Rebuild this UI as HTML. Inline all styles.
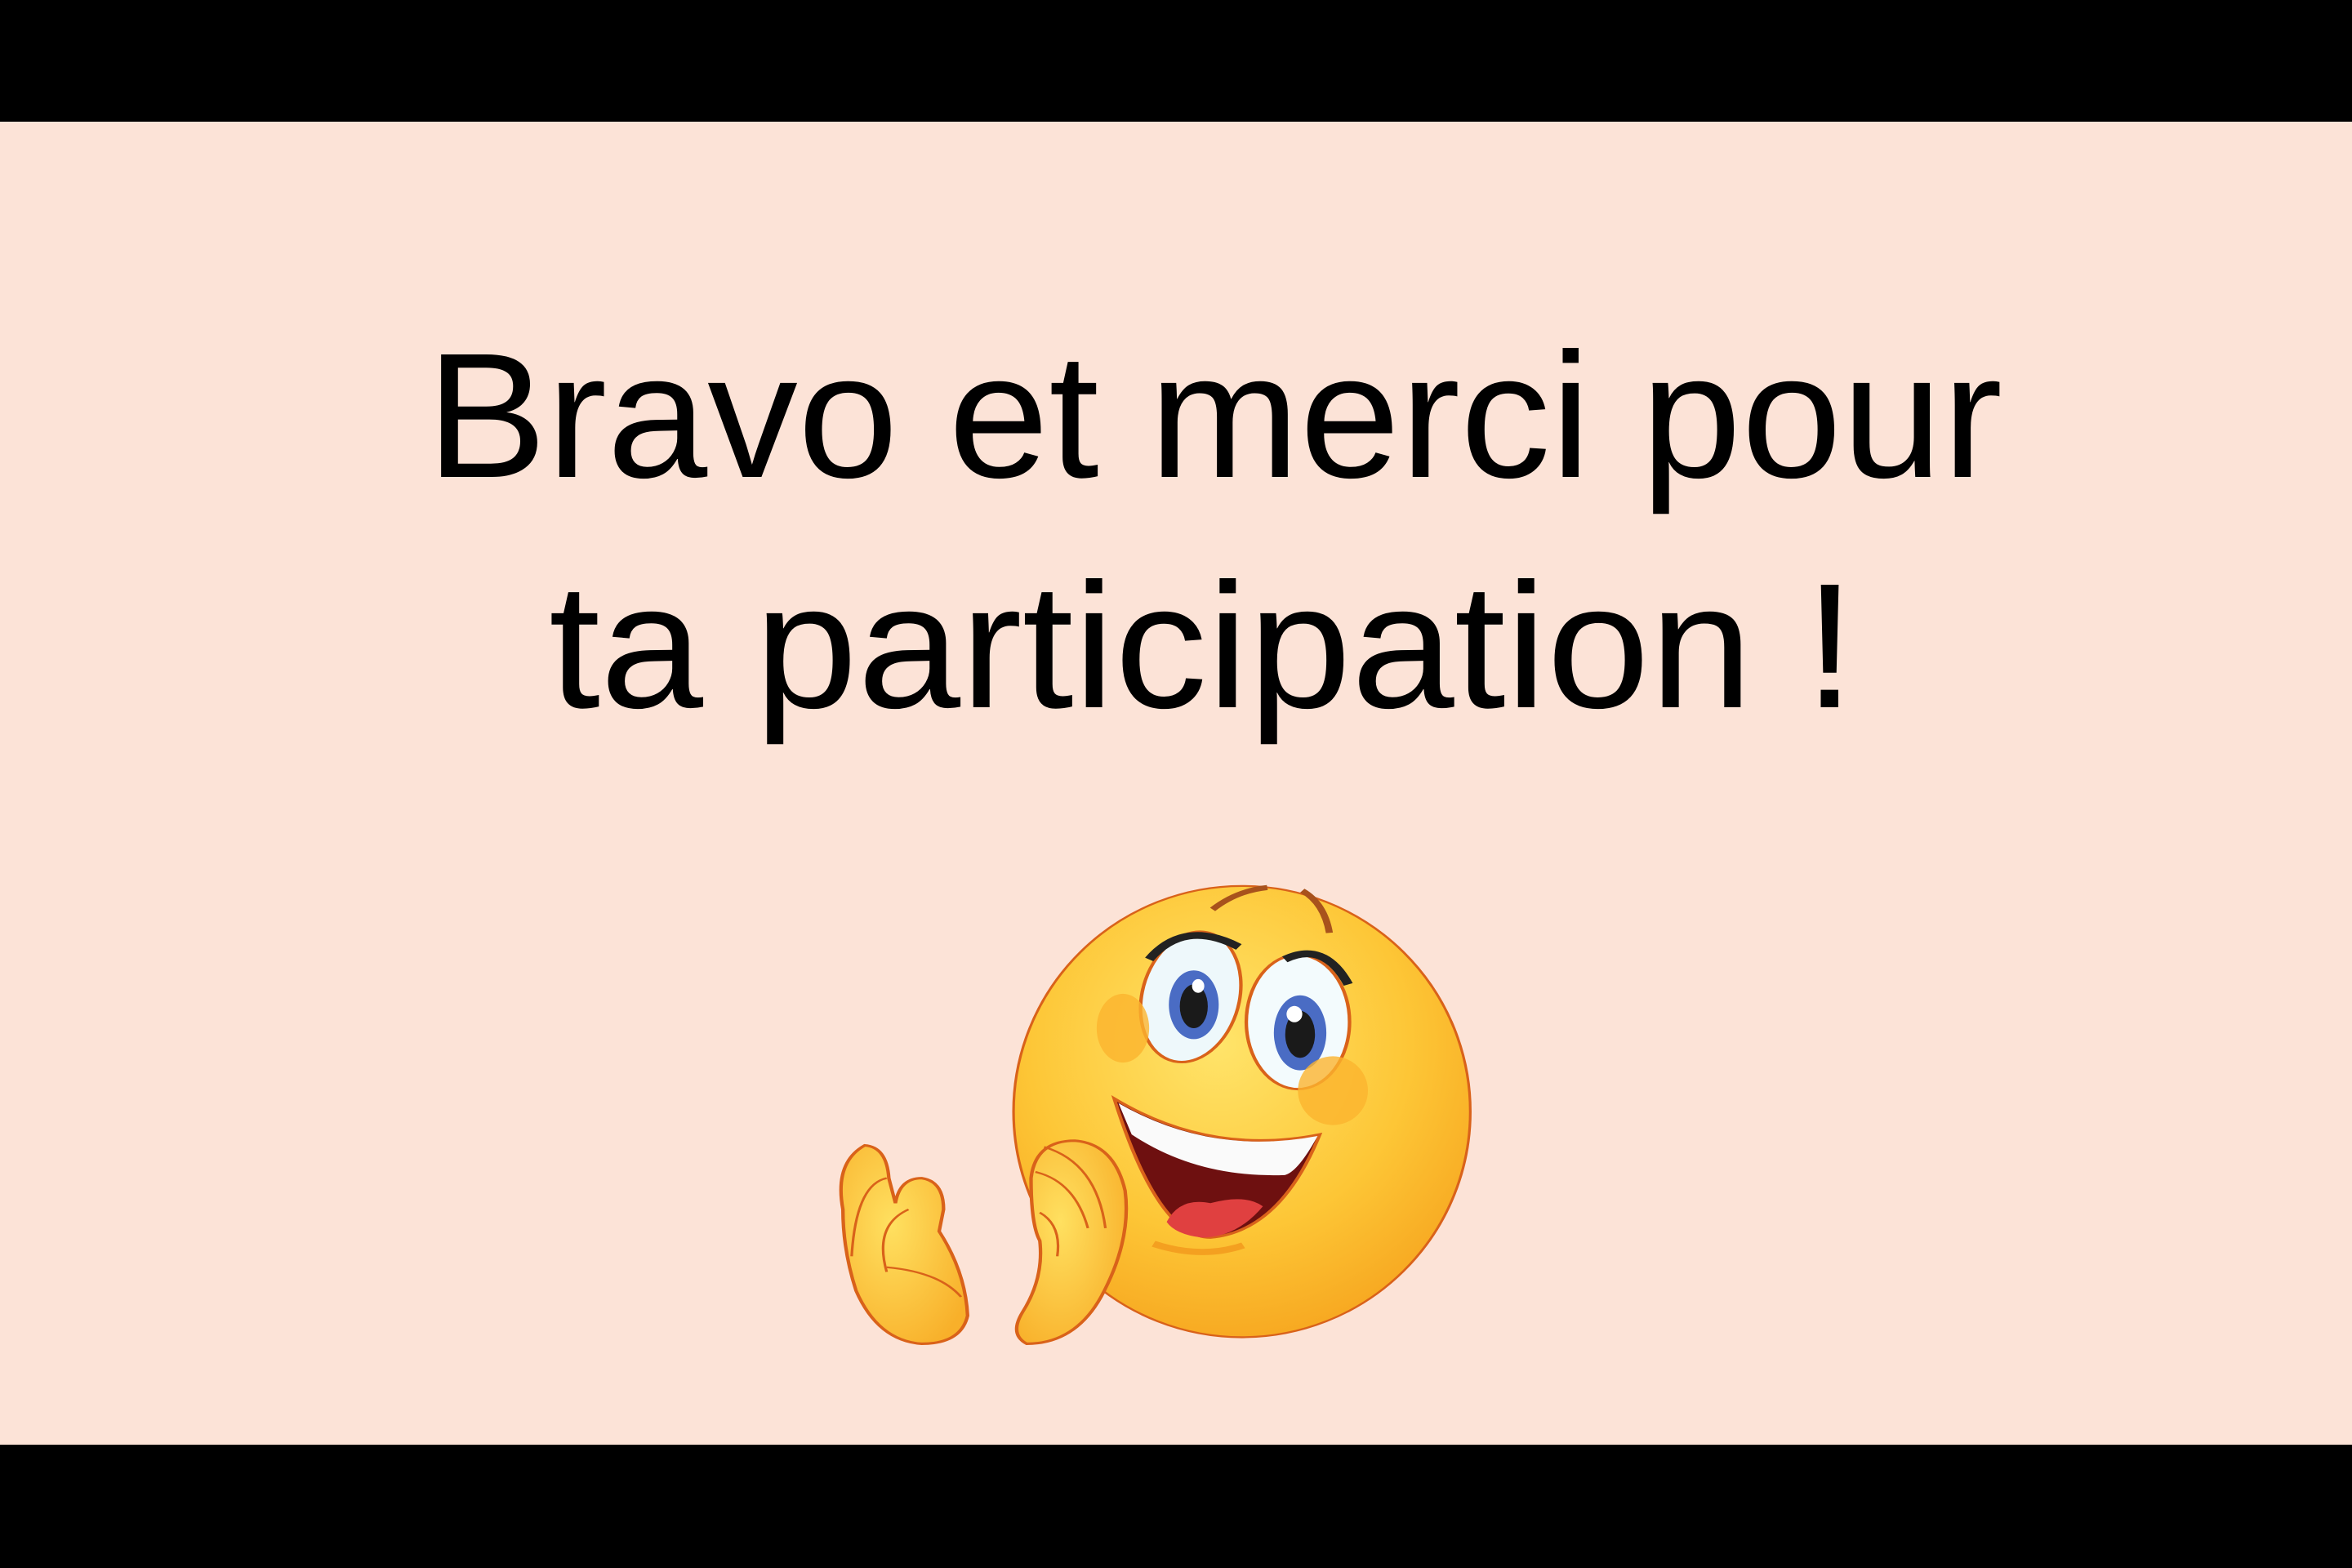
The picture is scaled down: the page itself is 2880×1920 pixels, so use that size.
<!DOCTYPE html>
<html><head><meta charset="utf-8"><style>
html,body{margin:0;padding:0;width:2880px;height:1920px;overflow:hidden;background:#fce3d7}
.bar{position:absolute;left:0;width:2880px;background:#000}
svg{position:absolute;left:0;top:0}
</style></head><body>
<div class="bar" style="top:0;height:149px"></div>
<div class="bar" style="top:1769px;height:151px"></div>
<svg width="2880" height="1920" viewBox="0 0 2880 1920">
<text x="522" y="584" font-family="Liberation Sans, sans-serif" font-size="218" textLength="1930" lengthAdjust="spacingAndGlyphs" fill="#000">Bravo et merci pour</text>
<text x="672" y="866" font-family="Liberation Sans, sans-serif" font-size="218" textLength="1600" lengthAdjust="spacingAndGlyphs" fill="#000">ta participation !</text>
</svg>
<svg style="left:1000px;top:1060px" width="840" height="600" viewBox="0 0 1568 1568" preserveAspectRatio="none">
<defs>
<radialGradient id="fg" cx="0.45" cy="0.35" r="0.7">
<stop offset="0" stop-color="#ffe46a"/><stop offset="0.6" stop-color="#fdc636"/><stop offset="1" stop-color="#f6a41e"/>
</radialGradient>
<radialGradient id="hg" cx="0.4" cy="0.4" r="0.7">
<stop offset="0" stop-color="#ffe060"/><stop offset="1" stop-color="#f8b02a"/>
</radialGradient>
</defs>
<ellipse cx="972" cy="787" rx="522" ry="722" fill="url(#fg)" stroke="#d9621a" stroke-width="6"/>
<path d="M905 140 Q960 80 1030 70" stroke="#a8521c" stroke-width="16" fill="none"/>
<path d="M1110 80 Q1160 120 1172 215" stroke="#a8521c" stroke-width="16" fill="none"/>
<ellipse cx="855" cy="420" rx="112" ry="210" fill="#eef8fb" stroke="#d9621a" stroke-width="8" transform="rotate(8 855 420)"/>
<path d="M760 300 Q840 170 965 260" stroke="#222" stroke-width="22" fill="none"/>
<ellipse cx="862" cy="445" rx="57" ry="110" fill="#4a6cc4"/>
<ellipse cx="862" cy="450" rx="32" ry="70" fill="#1a1a1a"/>
<ellipse cx="872" cy="385" rx="14" ry="22" fill="#fff"/>
<ellipse cx="1100" cy="500" rx="118" ry="215" fill="#f3fbfd" stroke="#d9621a" stroke-width="8"/>
<path d="M1070 300 Q1160 240 1215 380" stroke="#222" stroke-width="22" fill="none"/>
<ellipse cx="1105" cy="535" rx="60" ry="120" fill="#4a6cc4"/>
<ellipse cx="1105" cy="540" rx="34" ry="75" fill="#1a1a1a"/>
<ellipse cx="1092" cy="475" rx="18" ry="26" fill="#fff"/>
<ellipse cx="700" cy="520" rx="60" ry="110" fill="#fbb42e" opacity="0.8"/>
<ellipse cx="1180" cy="720" rx="80" ry="110" fill="#fbb42e" opacity="0.8"/>
<path d="M680 745 Q900 930 1150 860 Q1060 1170 900 1190 Q780 1190 680 745 Z" fill="#6e1010" stroke="#d9621a" stroke-width="8"/>
<path d="M690 760 Q900 930 1145 865 Q1100 980 1070 990 Q870 1000 720 860 Z" fill="#fafafa"/>
<path d="M800 1140 Q830 1060 900 1080 Q980 1050 1020 1090 Q960 1190 880 1190 Q820 1180 800 1140 Z" fill="#e04040"/>
<path d="M770 1210 Q880 1260 975 1215" stroke="#f4a020" stroke-width="20" fill="none"/>
<path d="M60 1100 Q40 950 110 895 Q160 900 165 1000 L180 1080 Q190 1000 240 1000 Q290 1010 290 1100 L280 1170 Q340 1300 345 1440 Q330 1530 240 1530 Q140 1520 90 1360 Q60 1230 60 1100 Z" fill="url(#hg)" stroke="#d9621a" stroke-width="8"/>
<path d="M160 1000 Q90 1020 80 1250" stroke="#d9621a" stroke-width="6" fill="none"/>
<path d="M210 1100 Q130 1150 160 1300" stroke="#d9621a" stroke-width="6" fill="none"/>
<path d="M160 1285 Q280 1300 330 1380" stroke="#d9621a" stroke-width="6" fill="none"/>
<path d="M490 1000 Q500 880 590 880 Q680 890 705 1040 Q720 1200 650 1380 Q590 1530 480 1530 Q440 1500 470 1430 Q520 1320 510 1200 Q490 1150 490 1000 Z" fill="url(#hg)" stroke="#d9621a" stroke-width="8"/>
<path d="M520 900 Q640 950 660 1160" stroke="#d9621a" stroke-width="6" fill="none"/>
<path d="M500 980 Q590 1010 620 1160" stroke="#d9621a" stroke-width="6" fill="none"/>
<path d="M510 1110 Q560 1150 550 1250" stroke="#d9621a" stroke-width="6" fill="none"/>
</svg>
</body></html>
